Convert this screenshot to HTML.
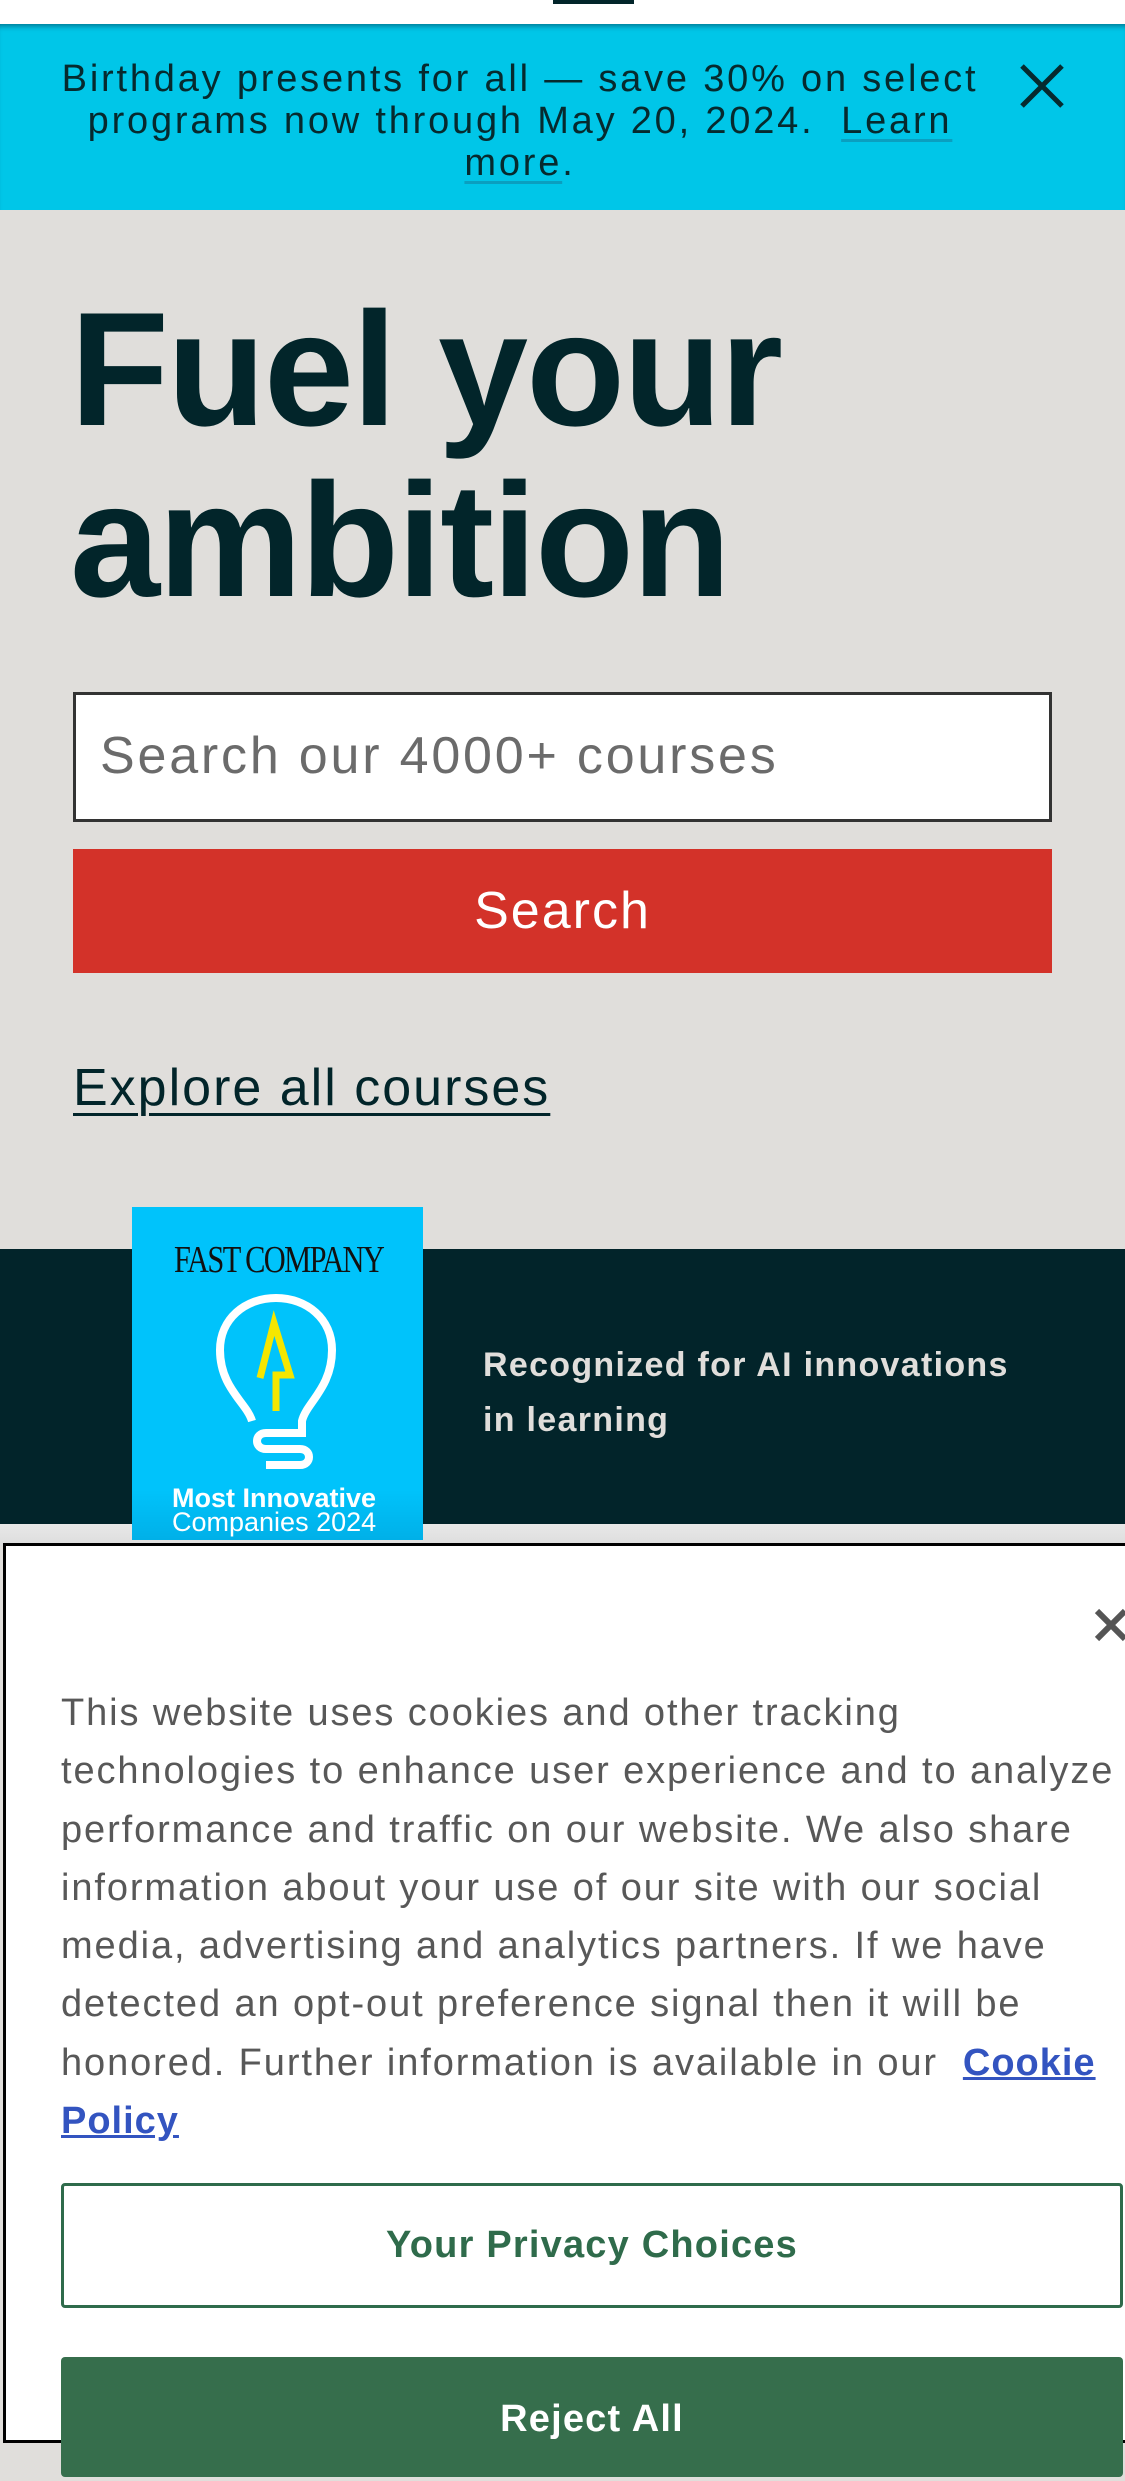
<!DOCTYPE html>
<html><head><meta charset="utf-8"><style>
*{margin:0;padding:0;box-sizing:border-box}
body{width:1125px;height:2436px;overflow:hidden;position:relative;background:#e0dedb;font-family:"Liberation Sans",sans-serif}
.a{position:absolute}
</style></head><body>
<div class="a" style="left:0;top:0;width:1125px;height:24px;background:#fff"></div>
<div class="a" style="left:553px;top:0;width:81px;height:4px;background:#02252a"></div>
<div class="a" style="left:0;top:24px;width:1125px;height:186px;background:#00c6e8;box-shadow:inset 0 6px 6px -4px rgba(0,60,80,.6)"></div>
<div class="a" style="left:20px;top:58px;width:1000px;text-align:center;font-size:38px;line-height:42px;color:#062a2e;letter-spacing:2.8px;white-space:nowrap">Birthday presents for all — save 30% on select<br>programs now through May 20, 2024.&nbsp; <span style="text-decoration:underline;text-decoration-color:#0a9fc0;text-underline-offset:6px">Learn</span><br><span style="text-decoration:underline;text-decoration-color:#0a9fc0;text-underline-offset:6px">more</span>.</div>
<svg class="a" style="left:1020px;top:64px" width="44" height="44" viewBox="0 0 44 44"><path d="M2 2L42 42M42 2L2 42" stroke="#062a2e" stroke-width="5"/></svg>
<div class="a" style="left:70px;top:284px;font-size:162px;line-height:171px;font-weight:bold;color:#02252a;letter-spacing:-2px">Fuel your<br>ambition</div>
<div class="a" style="left:73px;top:692px;width:979px;height:130px;border:3px solid #333;background:#fff"></div>
<div class="a" style="left:100px;top:726px;font-size:52px;letter-spacing:2.8px;color:#6b6b6b">Search our 4000+ courses</div>
<div class="a" style="left:73px;top:849px;width:979px;height:124px;background:#d33229;color:#fff;font-size:52px;letter-spacing:2px;text-align:center;line-height:124px">Search</div>
<div class="a" style="left:73px;top:1058px;font-size:52px;letter-spacing:2px;color:#02252a;text-decoration:underline;text-decoration-thickness:3px;text-underline-offset:8px">Explore all courses</div>
<div class="a" style="left:0;top:1249px;width:1125px;height:275px;background:#02242a"></div>
<div class="a" style="left:0;top:1524px;width:1125px;height:22px;background:linear-gradient(#e8e8e8,#ddd)"></div>
<div class="a" style="left:132px;top:1207px;width:291px;height:333px;background:linear-gradient(#00c3fb 85%,#00b0e8)"></div>
<div class="a" style="left:174px;top:1238px;font-family:'Liberation Serif',serif;font-size:38px;color:#111;letter-spacing:-2px;transform:scaleX(.8);transform-origin:left;white-space:nowrap">FAST COMPANY</div>
<svg class="a" style="left:214px;top:1293px" width="124" height="180" viewBox="0 0 124 180">
<path d="M38 128C33 110 6 95 6 57C6 26 31 5 62 5C93 5 118 26 118 57C118 95 92 110 88 128V140H52C40 140 40 156 52 156H86C98 156 98 172 86 172H52" fill="none" stroke="#fff" stroke-width="8"/>
<path d="M62 118V82H76L60 30L46 85" fill="none" stroke="#f5e600" stroke-width="7"/>
</svg>
<div class="a" style="left:172px;top:1486px;font-size:27px;line-height:24px;font-weight:bold;color:#fff;white-space:nowrap">Most Innovative<br><span style="font-weight:normal">Companies 2024</span></div>
<div class="a" style="left:483px;top:1338px;font-size:34px;line-height:55px;font-weight:bold;letter-spacing:1.3px;color:#e0dedb">Recognized for AI innovations<br>in learning</div>
<div class="a" style="left:3px;top:1543px;width:1130px;height:900px;background:#fff;border:3px solid #000"></div>
<svg class="a" style="left:1094px;top:1608px" width="40" height="34" viewBox="0 0 40 34"><path d="M3 3L31 31M31 3L3 31" stroke="#555" stroke-width="6"/></svg>
<div class="a" style="left:61px;top:1684px;width:1080px;font-size:38px;line-height:58.3px;color:#585858;letter-spacing:1.9px;white-space:nowrap">This website uses cookies and other tracking<br>technologies to enhance user experience and to analyze<br>performance and traffic on our website. We also share<br>information about your use of our site with our social<br>media, advertising and analytics partners. If we have<br>detected an opt-out preference signal then it will be<br>honored. Further information is available in our&nbsp; <span style="color:#3354c0;font-weight:bold;text-decoration:underline;letter-spacing:1px">Cookie</span><br><span style="color:#3354c0;font-weight:bold;text-decoration:underline;letter-spacing:1px">Policy</span></div>
<div class="a" style="left:61px;top:2183px;width:1062px;height:125px;border:3px solid #2f6b4b;border-radius:4px;background:#fff;color:#2f6b4b;font-weight:bold;font-size:38px;letter-spacing:1.2px;text-align:center;line-height:119px">Your Privacy Choices</div>
<div class="a" style="left:61px;top:2357px;width:1062px;height:120px;background:#366e4c;border-radius:4px;color:#fff;font-weight:bold;font-size:38px;letter-spacing:1.2px;text-align:center;line-height:124px">Reject All</div>
</body></html>
